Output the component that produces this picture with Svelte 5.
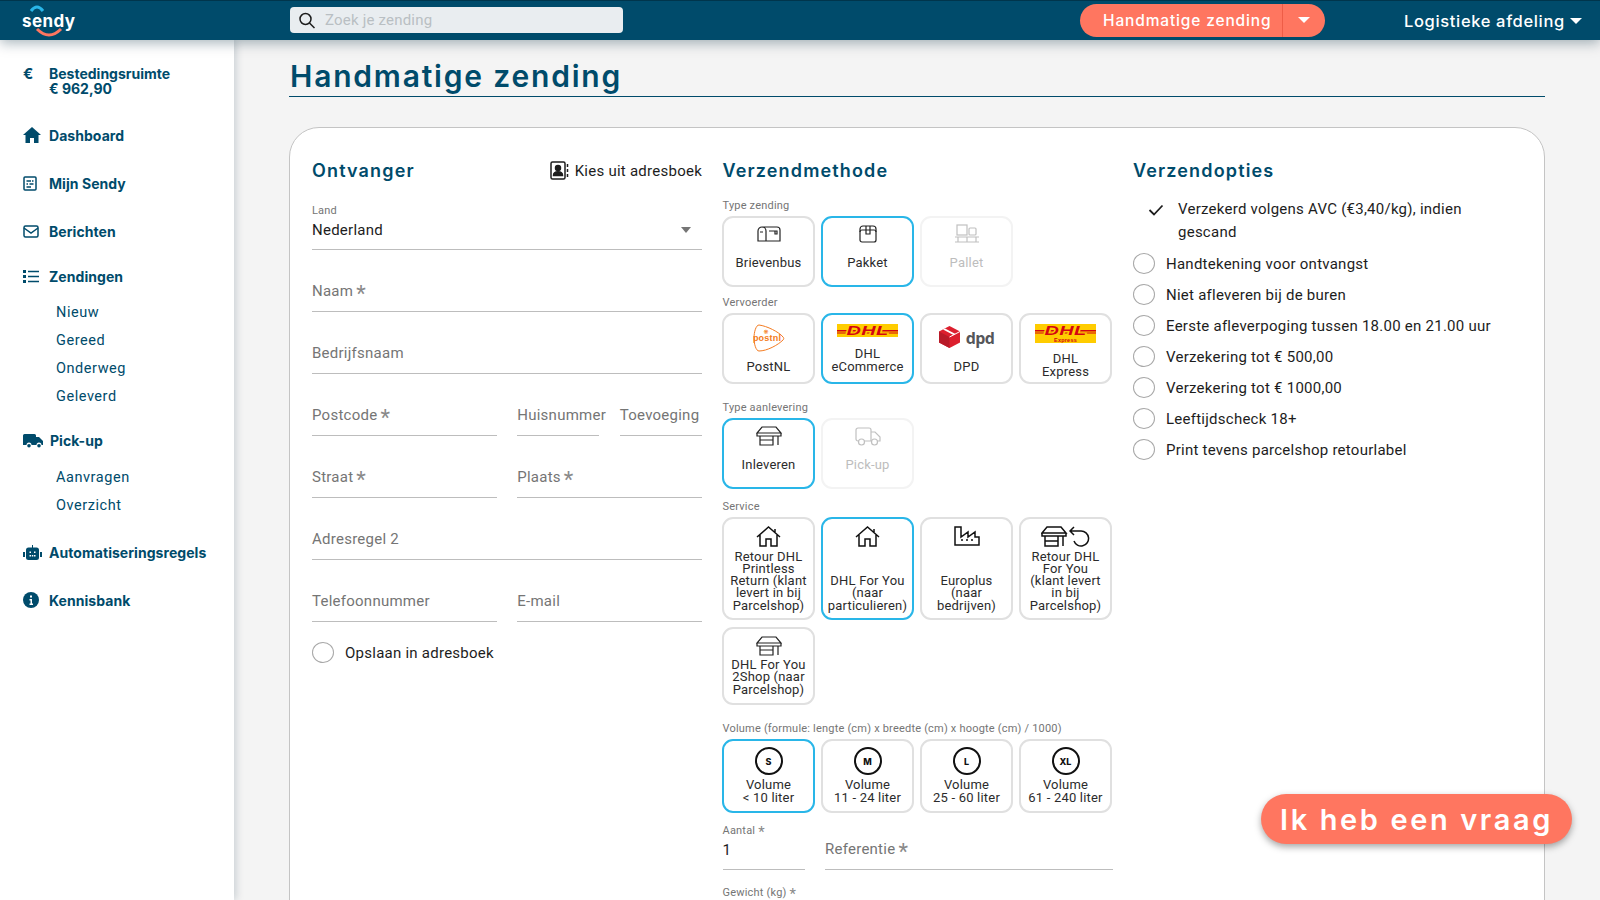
<script lang="ts">
  const soortTiles = [
    { icon: 'mailbox', label: 'Brievenbus' },
    { icon: 'box', label: 'Pakket', selected: true },
    { icon: 'pallet', label: 'Pallet', disabled: true }
  ];
  const carrierTiles = [
    { icon: 'postnl', label: 'PostNL' },
    { icon: 'dhl', label: 'DHL\neCommerce', selected: true },
    { icon: 'dpd', label: 'DPD' },
    { icon: 'express', label: 'DHL\nExpress', low: true }
  ];
  const deliveryTiles = [
    { icon: 'store', label: 'Inleveren', selected: true },
    { icon: 'truck', label: 'Pick-up', disabled: true }
  ];
  const serviceTiles = [
    { icon: 'home', label: 'Retour DHL\nPrintless\nReturn (klant\nlevert in bij\nParcelshop)' },
    { icon: 'home', label: 'DHL For You\n(naar\nparticulieren)', selected: true },
    { icon: 'factory', label: 'Europlus\n(naar\nbedrijven)' },
    { icon: 'storeback', label: 'Retour DHL\nFor You\n(klant levert\nin bij\nParcelshop)' }
  ];
  const shopTiles = [{ icon: 'store', label: 'DHL For You\n2Shop (naar\nParcelshop)' }];
  const volumeTiles = [
    { size: 'S', label: 'Volume\n< 10 liter', selected: true },
    { size: 'M', label: 'Volume\n11 - 24 liter' },
    { size: 'L', label: 'Volume\n25 - 60 liter' },
    { size: 'XL', label: 'Volume\n61 - 240 liter' }
  ];
  const options = [
    'Handtekening voor ontvangst',
    'Niet afleveren bij de buren',
    'Eerste afleverpoging tussen 18.00 en 21.00 uur',
    'Verzekering tot € 500,00',
    'Verzekering tot € 1000,00',
    'Leeftijdscheck 18+',
    'Print tevens parcelshop retourlabel'
  ];
</script>

{#snippet tileIcon(name)}
  {#if name === 'mailbox'}
    <svg width="24" height="16" viewBox="0 0 24 16" class="line"><path d="M5 1h15a3 3 0 0 1 3 3v11H1V5a4 4 0 0 1 4-4zM5 1a4 4 0 0 1 4 4v10M3 6h3M12 5h8v3h-2V5"/></svg>
  {:else if name === 'box'}
    <svg width="18" height="18" viewBox="0 0 18 18" class="line"><rect x="1" y="5" width="16" height="12" rx="2"/><path d="M1 7V4a3 3 0 0 1 3-3h10a3 3 0 0 1 3 3v3M7 1v8h4V1"/></svg>
  {:else if name === 'pallet'}
    <svg width="26" height="20" viewBox="0 0 26 20" class="line"><rect x="3" y="1" width="10" height="10"/><rect x="15" y="4" width="7" height="7" rx="1"/><path d="M1 13h24M1 18h24M4 13v5M13 13v5M22 13v5"/></svg>
  {:else if name === 'store'}
    <svg width="26" height="20" viewBox="0 0 26 20" class="line"><path d="M6 1h14l5 6H1zM1 7v3h24V7M4 10v9h13v-9M4 14h13M22 10v9"/></svg>
  {:else if name === 'truck'}
    <svg width="26" height="19" viewBox="0 0 26 19" class="line"><path d="M4 14H3a2 2 0 0 1-2-2V3a2 2 0 0 1 2-2h11a2 2 0 0 1 2 2v11H9M16 5h4l5 5v4h-3M16 14h1"/><circle cx="6.500" cy="15" r="3"/><circle cx="19.500" cy="15" r="3"/></svg>
  {:else if name === 'home'}
    <svg width="25" height="21" viewBox="0 0 25 21" class="line strong"><path d="M1 11 12.500 1 24 11M4 9v11h6v-7h5v7h6V9M19 3v3"/></svg>
  {:else if name === 'factory'}
    <svg width="26" height="20" viewBox="0 0 26 20" class="line strong"><path d="M1 1h6v10l7-5v5l7-5v5h4v8H1zM7 14h2M12 14h2M17 14h2"/></svg>
  {:else if name === 'storeback'}
    <svg width="50" height="21" viewBox="0 0 50 21" class="line strong"><path d="M6 1h14l5 6H1zM1 7v3h24V7M4 10v10h13V10M4 15h13M22 10v10"/><path d="M30 5h10a7.500 7.500 0 1 1-7 10M33 1l-4 4 4 4"/></svg>
  {:else if name === 'postnl'}
    <svg width="32" height="28" viewBox="0 0 32 28"><path class="pnl" d="M6 1C14 2 26 8 30 13c1 1 1 2 0 3C25 21 14 27 6 27 3 27 1 20 1 14S3 1 6 1z"/><text x="14" y="17" class="pnl-text">postnl</text><text x="13" y="9.500" class="pnl-mark">❋</text></svg>
  {:else if name === 'dhl' || name === 'express'}
    <svg width="61" height={name === 'express' ? 19 : 13} viewBox="0 0 61 {name === 'express' ? 19 : 13}">
      <rect width="61" height={name === 'express' ? 19 : 13} fill="#ffcc00"/>
      <rect y="6" width="61" height="1.500" fill="#d40511"/>
      <rect y="8.500" width="61" height="1" fill="#d40511"/>
      <text x="30.500" y="10.800" class="dhl-text" textLength="42" lengthAdjust="spacingAndGlyphs">DHL</text>
      {#if name === 'express'}<text x="30.500" y="17.500" class="express-text">Express</text>{/if}
    </svg>
  {:else if name === 'dpd'}
    <div class="dpd">
      <svg width="21" height="22" viewBox="0 0 21 22"><path d="M10.500 0 21 5.500v11L10.500 22 0 16.500v-11z" fill="#dc1f2e"/><path d="M10.500 11V22L0 16.500v-11z" fill="#b81a28"/><path d="M4 3.500 14.500 9l2-1L6 2.500z" fill="#fff"/><path d="M10.500 11 21 5.500" stroke="#fff"/></svg>
      <span>dpd</span>
    </div>
  {/if}
{/snippet}

{#snippet tile(t, cls)}
  <div class="tile {cls}" class:selected={t.selected} class:disabled={t.disabled} class:low={t.low}>
    <div class="tile-icon">
      {#if t.size}
        <span class="size">{t.size}</span>
      {:else}
        {@render tileIcon(t.icon)}
      {/if}
    </div>
    <div class="tile-label">{t.label}</div>
  </div>
{/snippet}

{#snippet field(label, required, cls = '')}
  <div class="field {cls}">
    <span>{label}{#if required}<i class="req">*</i>{/if}</span>
  </div>
{/snippet}

<div class="page">
  <header>
    <div class="logo">
      <span>sendy</span>
      <svg width="60" height="36" viewBox="0 0 60 36" aria-hidden="true">
        <path d="M13 7Q19-1 25 7" fill="none" stroke="#29b6e8" stroke-width="3"/>
        <path d="M19 25Q31 37 43 25" fill="none" stroke="#ff7660" stroke-width="3"/>
      </svg>
    </div>
    <div class="search">
      <svg width="16" height="17" viewBox="0 0 16 17" fill="none" stroke="#1d1d1d" stroke-width="1.500"><circle cx="6.500" cy="7" r="5.500"/><path d="m10.500 11 5 5"/></svg>
      <span>Zoek je zending</span>
    </div>
    <div class="split">
      <span class="split-main">Handmatige zending</span>
      <span class="split-arrow"><i class="caret"></i></span>
    </div>
    <div class="account">Logistieke afdeling <i class="caret"></i></div>
  </header>

  <div class="body">
    <aside>
      <div class="budget">
        <span class="euro">€</span>
        <span>Bestedingsruimte<br />€ 962,90</span>
      </div>
      <nav>
        <a class="item first">
          <span class="slot"><svg width="18" height="16" viewBox="0 0 18 16"><path d="M9 0 0 8h2.500v8H7v-5h4v5h4.500V8H18z"/></svg></span>
          Dashboard
        </a>
        <a class="item">
          <span class="slot"><svg width="14" height="15" viewBox="0 0 14 15" class="o"><rect x="1" y="1" width="12" height="13" rx="1"/><path d="M3.500 5H8M9 5h1.500M3.500 8H5M6.500 8h4M3.500 11H8"/></svg></span>
          Mijn Sendy
        </a>
        <a class="item">
          <span class="slot"><svg width="16" height="13" viewBox="0 0 16 13" class="o"><rect x="1" y="1" width="14" height="11" rx="1.500"/><path d="m1 3 7 5 7-5"/></svg></span>
          Berichten
        </a>
        <a class="item tight">
          <span class="slot"><svg width="16" height="13" viewBox="0 0 16 13"><path d="M0 0h3v3H0zM0 5h3v3H0zM0 10h3v3H0zM5 .7h11v1.600H5zM5 5.700h11v1.600H5zM5 10.700h11v1.600H5z"/></svg></span>
          Zendingen
        </a>
        <div class="sub">
          <a>Nieuw</a><a>Gereed</a><a>Onderweg</a><a>Geleverd</a>
        </div>
        <a class="item tight2">
          <span class="slot wide"><svg width="20" height="14" viewBox="0 0 20 14"><path d="M0 1.500A1.500 1.500 0 0 1 1.500 0h10A1.500 1.500 0 0 1 13 1.500V3h3l4 4v4h-1.500a2.500 2.500 0 0 0-5 0h-5a2.500 2.500 0 0 0-5 0H0z"/><circle cx="16" cy="11.800" r="1.800"/><circle cx="6" cy="11.800" r="1.800"/></svg></span>
          Pick-up
        </a>
        <div class="sub">
          <a>Aanvragen</a><a>Overzicht</a>
        </div>
        <a class="item after-sub">
          <span class="slot"><svg width="19" height="15" viewBox="0 0 19 15"><path d="M9 0h1v2.500h3.500A2.500 2.500 0 0 1 16 5v7.500a2.500 2.500 0 0 1-2.500 2.500h-8A2.500 2.500 0 0 1 3 12.500V5a2.500 2.500 0 0 1 2.500-2.500H9zM0 7h2v5H0zM17 7h2v5h-2z"/><path d="M6.500 10h1.500v1.500H6.500zM8.800 10h1.500v1.500H8.800zM11 10h1.500v1.500H11zM6.500 6.500h1.500V8H6.500zM11 6.500h1.500V8H11z" fill="#fff"/></svg></span>
          Automatiseringsregels
        </a>
        <a class="item">
          <span class="slot"><svg width="16" height="16" viewBox="0 0 16 16"><circle cx="8" cy="8" r="8"/><path d="M7 3.500h2v2H7zM6.500 7h2.500v4.500h1V13H6.500v-1.500h1v-3h-1z" fill="#fff"/></svg></span>
          Kennisbank
        </a>
      </nav>
    </aside>

    <main>
      <h1>Handmatige zending</h1>
      <section class="card">
        <div class="col">
          <div class="col-head">
            <h2>Ontvanger</h2>
            <div class="book">
              <svg width="19" height="19" viewBox="0 0 19 19" fill="none" stroke="#1d1d1d" stroke-width="1.500"><rect x="1" y="1" width="14" height="17" rx="1.500"/><circle cx="8" cy="7" r="2.500" fill="#1d1d1d"/><path d="M3.500 14.500c0-5 9-5 9 0z" fill="#1d1d1d"/><path d="M17.500 3v3M17.500 8v3M17.500 13v3"/></svg>
              Kies uit adresboek
            </div>
          </div>
          <div class="field land">
            <small>Land</small>
            <span class="value">Nederland</span>
            <i class="select-arrow"></i>
          </div>
          {@render field('Naam', true)}
          {@render field('Bedrijfsnaam', false)}
          <div class="row">
            {@render field('Postcode', true, 'half')}
            {@render field('Huisnummer', false, 'third')}
            {@render field('Toevoeging', false, 'third')}
          </div>
          <div class="row">
            {@render field('Straat', true, 'half')}
            {@render field('Plaats', true, 'half')}
          </div>
          {@render field('Adresregel 2', false)}
          <div class="row">
            {@render field('Telefoonnummer', false, 'half')}
            {@render field('E-mail', false, 'half')}
          </div>
          <div class="radio-row save"><i class="radio"></i>Opslaan in adresboek</div>
        </div>

        <div class="col">
          <div class="col-head"><h2>Verzendmethode</h2></div>
          <div class="sec s1">
            <small>Type zending</small>
            <div class="tiles">{#each soortTiles as t}{@render tile(t, 'basic')}{/each}</div>
          </div>
          <div class="sec s2">
            <small>Vervoerder</small>
            <div class="tiles">{#each carrierTiles as t}{@render tile(t, 'carrier')}{/each}</div>
          </div>
          <div class="sec s3">
            <small>Type aanlevering</small>
            <div class="tiles">{#each deliveryTiles as t}{@render tile(t, 'basic')}{/each}</div>
          </div>
          <div class="sec s4">
            <small>Service</small>
            <div class="tiles">
              {#each serviceTiles as t}{@render tile(t, 'service')}{/each}
              {#each shopTiles as t}{@render tile(t, 'shop')}{/each}
            </div>
          </div>
          <div class="sec s5">
            <small>Volume (formule: lengte (cm) x breedte (cm) x hoogte (cm) / 1000)</small>
            <div class="tiles">{#each volumeTiles as t}{@render tile(t, 'volume')}{/each}</div>
          </div>
          <div class="row amount">
            <div class="field aantal">
              <small>Aantal <i class="req">*</i></small>
              <span class="value">1</span>
            </div>
            {@render field('Referentie', true, 'ref')}
          </div>
          <small class="weight">Gewicht (kg) <i class="req">*</i></small>
        </div>

        <div class="col">
          <div class="col-head"><h2>Verzendopties</h2></div>
          <div class="insured">
            <svg width="16" height="12" viewBox="0 0 16 12" fill="none" stroke="#1d1d1d" stroke-width="1.800"><path d="m1.500 6 4.500 4.500 8.500-9"/></svg>
            <span>Verzekerd volgens AVC (€3,40/kg), indien gescand</span>
          </div>
          {#each options as o}
            <div class="radio-row"><i class="radio"></i>{o}</div>
          {/each}
        </div>
      </section>
    </main>
  </div>

  <button class="question">Ik heb een vraag</button>
</div>

<style>
  :global(body) {
    margin: 0;
    overflow: hidden;
  }

  .page {
    --navy: #004b6b;
    --coral: #ff7660;
    --head: Inter, "Open Sans", sans-serif;
    height: 900px;
    overflow: hidden;
    position: relative;
    font-family: Roboto, sans-serif;
    color: #1d1d1d;
    background: #f4f4f4;
  }

  header {
    height: 39px;
    border-top: 1px solid #00354c;
    background: var(--navy);
    display: flex;
    align-items: center;
    position: relative;
    z-index: 2;
    box-shadow: 0 3px 12px rgba(0, 40, 60, 0.35);
  }

  .logo {
    width: 290px;
    height: 36px;
    position: relative;
    flex: none;
  }

  .logo svg {
    position: absolute;
    left: 18px;
    top: 1px;
  }

  .logo span {
    position: absolute;
    left: 22px;
    top: 8px;
    color: #fff;
    font: 700 17px/20px var(--head);
    letter-spacing: 0.4px;
  }

  .search {
    width: 333px;
    height: 26px;
    margin-top: -1px;
    box-sizing: border-box;
    padding-left: 9px;
    display: flex;
    align-items: center;
    gap: 10px;
    background: #e9edf0;
    border-radius: 4px;
    color: #b9bfc3;
    font-size: 15px;
    letter-spacing: 0.2px;
  }

  .split {
    margin-left: 457px;
    width: 245px;
    height: 33px;
    margin-top: -1px;
    display: flex;
    background: var(--coral);
    border-radius: 17px;
    color: #fff;
    font: 500 15.500px/33px var(--head);
    letter-spacing: 0.85px;
  }

  .split-main {
    width: 203px;
    box-sizing: border-box;
    padding-left: 23px;
    border-right: 1px solid #ee5d47;
    white-space: nowrap;
  }

  .split-arrow {
    flex: 1;
    display: flex;
    align-items: center;
    justify-content: center;
  }

  .caret {
    display: inline-block;
    border-left: 6px solid transparent;
    border-right: 6px solid transparent;
    border-top: 6px solid #fff;
  }

  .account {
    margin-left: 79px;
    color: #fff;
    font: 500 16.500px/20px var(--head);
    letter-spacing: 0.65px;
    white-space: nowrap;
    display: flex;
    align-items: center;
    gap: 5px;
  }

  .body {
    display: flex;
    height: 860px;
  }

  aside {
    width: 234px;
    flex: none;
    background: #fff;
    box-shadow: 2px 0 8px rgba(0, 40, 60, 0.18);
    position: relative;
    z-index: 1;
    color: var(--navy);
    font-weight: 700;
    box-sizing: border-box;
    padding: 27px 0 0 23px;
  }

  .budget {
    display: flex;
    font-family: Inter, sans-serif;
    font-size: 14px;
    line-height: 14.500px;
    height: 28px;
  }

  .euro {
    width: 26px;
    font-size: 15px;
  }

  nav {
    display: flex;
    flex-direction: column;
  }

  .item {
    display: flex;
    align-items: center;
    height: 20px;
    margin-top: 28px;
    font-family: Inter, sans-serif;
    font-size: 14px;
    letter-spacing: 0.05px;
    white-space: nowrap;
  }

  .slot {
    width: 26px;
    flex: none;
    display: flex;
    align-items: center;
  }

  .slot.wide {
    width: 27px;
  }

  .slot svg {
    fill: var(--navy);
  }

  .slot svg.o {
    fill: none;
    stroke: var(--navy);
    stroke-width: 1.500;
  }

  .item.first {
    margin-top: 30px;
  }

  .item.tight {
    margin-top: 25px;
  }

  .item.tight2 {
    margin-top: 19.500px;
  }

  .item.after-sub {
    margin-top: 22.500px;
  }

  .sub {
    display: flex;
    flex-direction: column;
    padding: 13px 0 0 33px;
    font-weight: 400;
    font-size: 14.500px;
    letter-spacing: 0.55px;
  }

  .sub a {
    height: 28px;
    line-height: 28px;
  }

  main {
    flex: 1;
    padding: 0 55px;
    min-width: 0;
    background: #f4f4f4;
  }

  h1 {
    margin: 0;
    height: 57px;
    box-sizing: border-box;
    padding: 17px 0 0 1px;
    border-bottom: 1px solid var(--navy);
    color: var(--navy);
    font: 600 30px/38px var(--head);
    letter-spacing: 1.8px;
  }

  .card {
    margin-top: 30px;
    height: 900px;
    box-sizing: border-box;
    padding: 28px 21px 28px 22px;
    display: grid;
    grid-template-columns: 390px 390px 390px;
    column-gap: 20.500px;
    background: #fff;
    border: 1px solid #c4c4c4;
    border-radius: 30px;
  }

  .col-head {
    height: 30px;
    display: flex;
    align-items: center;
    justify-content: space-between;
  }

  h2 {
    margin: 0;
    color: var(--navy);
    font: 600 18px/30px var(--head);
    letter-spacing: 1.15px;
  }

  .book {
    display: flex;
    align-items: center;
    gap: 6px;
    font-size: 15px;
    letter-spacing: 0.25px;
    margin-top: -1px;
  }

  small {
    display: block;
    font-size: 11px;
    line-height: 14px;
    color: #757575;
    letter-spacing: 0.2px;
  }

  .field {
    height: 62px;
    box-sizing: border-box;
    border-bottom: 1.500px solid #bdbdbd;
    padding-bottom: 11.500px;
    display: flex;
    flex-direction: column;
    justify-content: flex-end;
    font-size: 15px;
    line-height: 18px;
    color: #757575;
    letter-spacing: 0.25px;
    white-space: nowrap;
    position: relative;
  }

  .req {
    font-style: normal;
    font-size: 22px;
    line-height: 10px;
    margin-left: 3px;
    vertical-align: -5px;
    color: #8a8a8a;
  }

  small .req {
    font-size: 15px;
    margin-left: 0;
    vertical-align: -3px;
  }

  .value {
    color: #1d1d1d;
  }

  .land {
    margin-top: 2px;
    padding-bottom: 10.500px;
  }

  .land small {
    margin-bottom: 3px;
  }

  .select-arrow {
    position: absolute;
    right: 11px;
    bottom: 16px;
    border-left: 5px solid transparent;
    border-right: 5px solid transparent;
    border-top: 6px solid #757575;
  }

  .row {
    display: flex;
    gap: 20.500px;
  }

  .half {
    width: 184.750px;
  }

  .third {
    width: 82px;
  }

  .radio-row {
    display: flex;
    align-items: center;
    height: 31px;
    gap: 11px;
    font-size: 15px;
    letter-spacing: 0.25px;
    white-space: nowrap;
  }

  .radio {
    width: 20px;
    height: 19px;
    border: 1px solid #a8a8a8;
    border-radius: 50%;
    flex: none;
  }

  .save {
    margin-top: 15px;
  }

  .sec small {
    margin-bottom: 3px;
  }

  .s1 {
    margin-top: 13px;
  }

  .s2 {
    margin-top: 9px;
  }

  .s3 {
    margin-top: 17px;
  }

  .s4 {
    margin-top: 11px;
  }

  .s5 {
    margin-top: 17px;
  }

  .tiles {
    display: grid;
    grid-template-columns: repeat(4, 93px);
    gap: 7px 6px;
    margin-left: -0.500px;
  }

  .tile {
    box-sizing: border-box;
    height: 71px;
    border: 2px solid #e0e0e0;
    border-radius: 11px;
    display: flex;
    flex-direction: column;
    align-items: center;
    text-align: center;
    font-size: 13px;
    line-height: 12.300px;
    letter-spacing: 0.2px;
    color: #2b2b2b;
    padding: 7px 0 0;
    background: #fff;
  }

  .tile.selected {
    border-color: #29b6e8;
  }

  .tile.disabled {
    border-color: #f3f3f3;
    color: #bdbdbd;
  }

  .tile.disabled .tile-icon {
    opacity: 0.28;
  }

  .tile-icon {
    height: 24px;
    display: flex;
    align-items: center;
    justify-content: center;
    flex: none;
  }

  .tile-label {
    margin-top: auto;
    padding-bottom: 9px;
    white-space: pre;
  }

  .basic {
    padding-top: 4px;
  }

  .basic .tile-label {
    padding-bottom: 16px;
  }

  .carrier .tile-icon {
    align-items: flex-start;
    padding-top: 2px;
  }

  .carrier.low .tile-label {
    padding-bottom: 4px;
  }

  .service {
    height: 103px;
    padding-top: 5px;
  }

  .service .tile-label {
    padding-bottom: 6px;
  }

  .shop {
    height: 78px;
    padding-top: 5px;
  }

  .shop .tile-label {
    padding-bottom: 7px;
  }

  .volume {
    height: 74px;
    padding-top: 6px;
  }

  .volume .tile-icon {
    height: 28px;
  }

  .volume .tile-label {
    padding-bottom: 7px;
  }

  .size {
    box-sizing: border-box;
    width: 28px;
    height: 28px;
    border: 2px solid #111;
    border-radius: 50%;
    display: flex;
    align-items: center;
    justify-content: center;
    font: 800 9px/1 Inter, sans-serif;
    color: #111;
    letter-spacing: 0;
  }

  .line {
    fill: none;
    stroke: #222;
    stroke-width: 1.200;
  }

  .line.strong {
    stroke-width: 1.500;
    stroke: #111;
  }

  .pnl {
    fill: #fff;
    stroke: #f47b20;
    stroke-width: 1;
  }

  .pnl-text {
    fill: #f47b20;
    font: 700 9px "Liberation Sans", sans-serif;
    text-anchor: middle;
  }

  .pnl-mark {
    fill: #f47b20;
    font: 6px "DejaVu Sans", sans-serif;
    text-anchor: middle;
  }

  .dhl-text {
    fill: #d40511;
    font: italic 700 12px "Liberation Sans", sans-serif;
    text-anchor: middle;
    stroke: #ffcc00;
    stroke-width: 2px;
    paint-order: stroke;
  }

  .express-text {
    fill: #d40511;
    font: 700 5.500px "Liberation Sans", sans-serif;
    text-anchor: middle;
  }

  .dpd {
    display: flex;
    align-items: flex-start;
    gap: 6px;
    color: #55565a;
    font: 700 16px/20px "Open Sans", sans-serif;
    margin-top: 2px;
  }

  .dpd span {
    letter-spacing: -0.7px;
    margin-top: 2px;
  }

  .amount {
    margin-top: 14px;
  }

  .aantal {
    width: 82px;
    height: 43px;
    flex: none;
    padding-bottom: 10px;
  }

  .aantal small {
    margin-bottom: 3px;
  }

  .ref {
    flex: 1;
    height: 43px;
    padding-bottom: 11px;
  }

  .weight {
    margin-top: 16px;
  }

  .insured {
    display: flex;
    align-items: flex-start;
    margin-top: 12px;
    padding-left: 15px;
    font-size: 15px;
    line-height: 22.500px;
    letter-spacing: 0.25px;
    margin-bottom: 5px;
  }

  .insured svg {
    flex: none;
    margin: 6px 14px 0 0;
  }

  .insured span {
    width: 320px;
  }

  .question {
    position: absolute;
    left: 1261px;
    top: 794px;
    width: 311px;
    height: 50px;
    padding: 1px 0 0;
    border: 0;
    border-radius: 25px;
    background: var(--coral);
    color: #fff;
    font: 600 29px/50px var(--head);
    letter-spacing: 2.6px;
    white-space: nowrap;
    box-shadow: 0 3px 7px rgba(0, 0, 0, 0.35);
    z-index: 3;
  }
</style>
